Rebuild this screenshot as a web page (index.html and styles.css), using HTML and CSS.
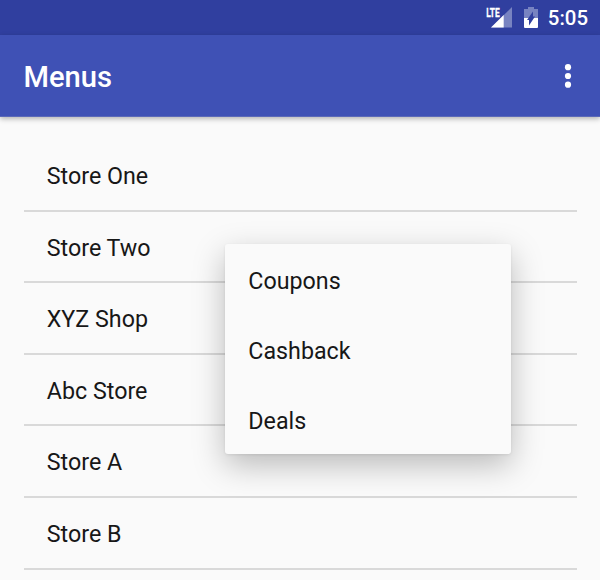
FILE: index.html
```html
<!DOCTYPE html>
<html lang="en">
<head>
<meta charset="utf-8">
<title>Menus</title>
<link rel="stylesheet" href="styles.css">
</head>
<body>
<div class="status">
  <svg class="signal" width="32" height="30" viewBox="-4 -6 32 30">
    <path d="M26 1V21.5H5z" fill="#7883c1"/>
    <path d="M17.7 9V21.5H5z" fill="#fff"/>
    <path d="M0 0H14.5V11.5H0z" fill="#303f9f"/>
    <text class="lte" transform="translate(.2 10.7) scale(.66 1)">LTE</text>
  </svg>
  <svg class="battery" width="14" height="22" viewBox="0 0 14 22">
    <path d="M4 0h6v2h4v9H0V2h4z" fill="#7883c1"/>
    <path d="M0 11h14v9q0 1-1 1H1q-1 0-1-1z" fill="#fff"/>
    <path d="M9 4.5v5H11L5 18.5V13H3z" fill="#303f9f"/>
  </svg>
  <span class="time">5:05</span>
</div>
<header class="appbar">
  <h1>Menus</h1>
  <svg class="more" width="8" height="26" viewBox="0 0 8 26" fill="#fff"><circle cx="4" cy="4.2" r="3.1"/><circle cx="4" cy="13" r="3.1"/><circle cx="4" cy="21.7" r="3.1"/></svg>
</header>
<ul class="list">
  <li>Store One</li>
  <li>Store Two</li>
  <li>XYZ Shop</li>
  <li>Abc Store</li>
  <li>Store A</li>
  <li>Store B</li>
</ul>
<div class="popup">
  <div class="item">Coupons</div>
  <div class="item">Cashback</div>
  <div class="item">Deals</div>
</div>
</body>
</html>
```
FILE: styles.css
```css
* { box-sizing: border-box; }
body {
  margin: 0;
  height: 580px;
  overflow: hidden;
  background: #fafafa;
  color: #171717;
  font-family: Roboto, sans-serif;
  font-size: 23.25px;
}
.status {
  height: 35px;
  display: flex;
  align-items: flex-start;
  padding-right: 12px;
  justify-content: flex-end;
  background: #303f9f;
  color: #fff;
}
.signal { margin-right: 10px; }
.lte { font-size: 12.6px; font-weight: 700; fill: #fff; stroke: #fff; stroke-width: .3px; }
.battery { margin: 7px 10px 0 0; }
.time { font-size: 20.4px; font-weight: 500; line-height: 25px; margin-top: 6px; }
.appbar {
  height: 82px;
  display: flex;
  align-items: center;
  justify-content: space-between;
  padding: 0 28px 0 23.5px;
  background: #3f51b5;
  color: #fff;
  border-bottom: 1px solid #5b69b8;
  box-shadow: 0 2px 5px rgba(0, 0, 0, .28);
}
h1 { margin: 0; font-size: 29.17px; font-weight: 500; line-height: 34px; padding-top: 2px; }
.list { list-style: none; margin: 0; padding: 23px 23.5px 0; }
.list li {
  height: 71.6px;
  padding-left: 23.3px;
  line-height: 73.6px;
  background: linear-gradient(#d9d9d9, #d9d9d9) 0 100% / 100% 2px no-repeat;
}
.popup {
  position: absolute;
  left: 225px;
  top: 244px;
  width: 286px;
  height: 210px;
  background: #fafafa;
  border-radius: 3px;
  box-shadow: 0 11px 32px rgba(0, 0, 0, .26), 0 1px 3px rgba(0, 0, 0, .08);
}
.item { height: 70px; line-height: 74px; padding-left: 23.3px; }
```
